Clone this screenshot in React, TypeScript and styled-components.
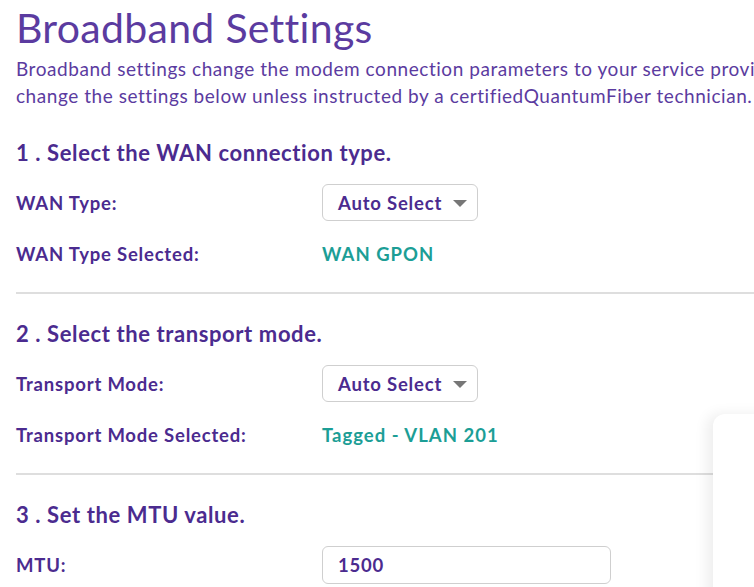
import React from 'react'
import styled, { createGlobalStyle } from 'styled-components'

const Global = createGlobalStyle`
  html, body {
    margin: 0;
    padding: 0;
    background: #fff;
    overflow: hidden;
  }
  body {
    font-family: Lato, "Noto Sans", sans-serif;
  }
`

const purple = '#4b2b8f'
const teal = '#1c9e96'

const Page = styled.div`
  position: relative;
  width: 754px;
  height: 587px;
  overflow: hidden;
`

const Content = styled.div`
  width: 1000px;
  padding: 0 0 0 16px;
`

const Title = styled.h1`
  margin: 0;
  padding-top: 6px;
  font-size: 41px;
  line-height: 44px;
  font-weight: 400;
  color: #5b3ba0;
  letter-spacing: 0.3px;
`

const Intro = styled.p`
  margin: 5px 0 0;
  font-size: 19px;
  line-height: 27px;
  letter-spacing: 0.55px;
  color: #5b3ba0;
  white-space: nowrap;
`

const Section = styled.section<{ last?: boolean; first?: boolean }>`
  display: flex;
  flex-direction: column;
  gap: 14px;
  padding-top: ${(p) => (p.first ? '31px' : '27px')};
  padding-bottom: 20px;
  border-bottom: ${(p) => (p.last ? 'none' : '2px solid #dedede')};
  width: 738px;
`

const Heading = styled.h2`
  margin: 0 0 4px;
  font-size: 22px;
  line-height: 26px;
  font-weight: 700;
  letter-spacing: 0.6px;
  color: ${purple};
`

const Row = styled.div`
  display: grid;
  grid-template-columns: 306px 1fr;
  align-items: center;
  min-height: 37px;
`

const Label = styled.div`
  font-size: 18.5px;
  font-weight: 700;
  letter-spacing: 0.8px;
  color: ${purple};
`

const Value = styled.div`
  font-size: 18.5px;
  font-weight: 700;
  letter-spacing: 1px;
  color: ${teal};
`

const Select = styled.div`
  display: inline-flex;
  align-items: center;
  justify-self: start;
  box-sizing: border-box;
  height: 37px;
  padding: 0 10px 0 15px;
  border: 1px solid #cfcfcf;
  border-radius: 6px;
  font-size: 18.5px;
  font-weight: 700;
  letter-spacing: 0.8px;
  color: ${purple};
  gap: 11px;
`

const Caret = styled.span`
  width: 0;
  height: 0;
  border-left: 7.5px solid transparent;
  border-right: 7.5px solid transparent;
  border-top: 7px solid #777;
  margin-top: 2px;
`

const Input = styled.div`
  box-sizing: border-box;
  width: 289px;
  height: 38px;
  padding: 0 15px;
  display: flex;
  align-items: center;
  border: 1px solid #cfcfcf;
  border-radius: 6px;
  font-size: 18.5px;
  font-weight: 700;
  letter-spacing: 0.8px;
  color: ${purple};
`

const SideCard = styled.div`
  position: absolute;
  left: 713px;
  top: 414px;
  width: 300px;
  height: 300px;
  background: #fff;
  border-top-left-radius: 12px;
  box-shadow: -6px 0 14px rgba(0, 0, 0, 0.07);
`

export default function App() {
  return (
    <Page>
      <Global />
      <Content>
        <Title>Broadband Settings</Title>
        <Intro>
          Broadband settings change the modem connection parameters to your service provider. Do not
          <br />
          change the settings below unless instructed by a certifiedQuantumFiber technician.
        </Intro>

        <Section first>
          <Heading>1 . Select the WAN connection type.</Heading>
          <Row>
            <Label>WAN Type:</Label>
            <Select>
              Auto Select <Caret />
            </Select>
          </Row>
          <Row>
            <Label>WAN Type Selected:</Label>
            <Value>WAN GPON</Value>
          </Row>
        </Section>

        <Section>
          <Heading>2 . Select the transport mode.</Heading>
          <Row>
            <Label>Transport Mode:</Label>
            <Select>
              Auto Select <Caret />
            </Select>
          </Row>
          <Row>
            <Label>Transport Mode Selected:</Label>
            <Value>Tagged - VLAN 201</Value>
          </Row>
        </Section>

        <Section last>
          <Heading>3 . Set the MTU value.</Heading>
          <Row>
            <Label>MTU:</Label>
            <Input>1500</Input>
          </Row>
        </Section>
      </Content>
      <SideCard />
    </Page>
  )
}
